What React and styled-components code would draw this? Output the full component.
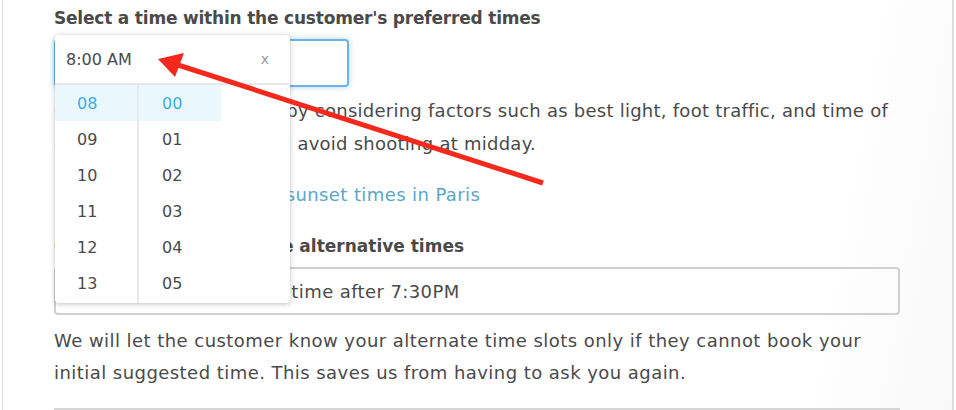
import React from "react";
import styled, { createGlobalStyle } from "styled-components";

const Global = createGlobalStyle`
  html, body {
    margin: 0;
    padding: 0;
    background: #fff;
  }
  body {
    font-family: "DejaVu Sans", "Noto Sans", sans-serif;
    color: #4a4a4a;
  }
`;

const Frame = styled.div`
  position: relative;
  width: 949px;
  height: 410px;
  margin-left: 2px;
  border-left: 1px solid #dcdcdc;
  border-right: 2px solid #dcdcdc;
  overflow: hidden;
  background: linear-gradient(100deg, #fff 85%, #f8f8f8 100%);
`;

const Content = styled.div`
  width: 846px;
  padding: 6px 0 0 51px;
  display: flex;
  flex-direction: column;
`;

const Label = styled.div`
  margin-top: ${(p) => p.top || 0}px;
  font-size: 17px;
  font-weight: 700;
  letter-spacing: ${(p) => p.spacing || 0}px;
  line-height: 24px;
  color: #4a4a4a;
  white-space: nowrap;
`;

const Field = styled.div`
  position: relative;
  margin-top: ${(p) => p.gap || 9}px;
  width: ${(p) => p.width || "100%"};
`;

const Input = styled.div`
  box-sizing: border-box;
  height: 48px;
  border: 2px solid ${(p) => (p.focused ? "#6bb2e6" : "#d0d0d0")};
  border-radius: 4px;
  box-shadow: ${(p) => (p.focused ? "0 0 6px rgba(107,178,230,0.5)" : "none")};
  padding: 0 14px;
  display: flex;
  align-items: center;
  font-size: 18px;
  letter-spacing: 0.4px;
  color: #4a4a4a;
`;

const Para = styled.p`
  margin: ${(p) => p.top}px 0 0;
  font-size: 18px;
  letter-spacing: ${(p) => p.spacing || 0.4}px;
  line-height: ${(p) => p.lh}px;
  color: #4a4a4a;
  white-space: nowrap;
`;

const Link = styled.a`
  margin-top: 18px;
  font-size: 18px;
  letter-spacing: 0.4px;
  line-height: 33px;
  color: #5aa6c9;
  text-decoration: none;
`;

const Rule = styled.div`
  margin-top: 19px;
  height: 2px;
  background: #d6d6d6;
`;

const Popup = styled.div`
  position: absolute;
  left: 1px;
  top: -4px;
  width: 235px;
  background: #fff;
  border-radius: 4px;
  box-shadow: 0 1px 5px rgba(0, 0, 0, 0.25);
  z-index: 2;
  overflow: hidden;
`;

const PopupHead = styled.div`
  height: 48px;
  display: flex;
  align-items: center;
  justify-content: space-between;
  padding: 0 21px 0 11px;
  border-bottom: 2px solid #e8e8e8;
  font-size: 16px;
  color: #4a4a4a;
`;

const Clear = styled.span`
  color: #9a9a9a;
  font-size: 14px;
`;

const Columns = styled.div`
  display: flex;
  height: 218px;
`;

const Column = styled.div`
  width: 82px;
  border-right: ${(p) => (p.divided ? "2px solid #e8e8e8" : "none")};
  display: flex;
  flex-direction: column;
`;

const Cell = styled.div`
  height: 36px;
  display: flex;
  align-items: center;
  padding-left: ${(p) => p.indent}px;
  font-size: 16px;
  color: ${(p) => (p.active ? "#3aaee6" : "#4a4a4a")};
  background: ${(p) => (p.active ? "#eaf8fe" : "transparent")};
`;

const Arrow = styled.svg`
  position: absolute;
  left: 0;
  top: 0;
  pointer-events: none;
  z-index: 3;
`;

const hours = ["08", "09", "10", "11", "12", "13"];
const minutes = ["00", "01", "02", "03", "04", "05"];

export default function App() {
  return (
    <>
      <Global />
      <Frame>
        <Content>
          <Label spacing={-0.2}>Select a time within the customer's preferred times</Label>
          <Field width="295px">
            <Input focused>8:00 AM</Input>
            <Popup>
              <PopupHead>
                8:00 AM
                <Clear>x</Clear>
              </PopupHead>
              <Columns>
                <Column divided>
                  {hours.map((h, i) => (
                    <Cell key={h} indent={22} active={i === 0}>{h}</Cell>
                  ))}
                </Column>
                <Column>
                  {minutes.map((m, i) => (
                    <Cell key={m} indent={23} active={i === 0}>{m}</Cell>
                  ))}
                </Column>
              </Columns>
            </Popup>
          </Field>
          <Para top={7} lh={33} spacing={0.25}>
            Choose your time wisely by considering factors such as best light, foot traffic, and time of
            <br />
            day. Generally, we should avoid shooting at midday.
          </Para>
          <Link href="#">Look up the sunrise and sunset times in Paris</Link>
          <Label top={23}>Optionally, provide some alternative times</Label>
          <Field gap={9}>
            <Input>e.g. Wednesday or any time after 7:30PM</Input>
          </Field>
          <Para top={10} lh={32} spacing={0.45}>
            We will let the customer know your alternate time slots only if they cannot book your
            <br />
            initial suggested time. This saves us from having to ask you again.
          </Para>
          <Rule />
        </Content>
        <Arrow width="956" height="410" viewBox="0 0 956 410">
          <line x1="540" y1="183" x2="172" y2="64" stroke="#f5281e" strokeWidth="5" />
          <polygon points="155,59 181,53 172,77" fill="#f5281e" />
        </Arrow>
      </Frame>
    </>
  );
}
